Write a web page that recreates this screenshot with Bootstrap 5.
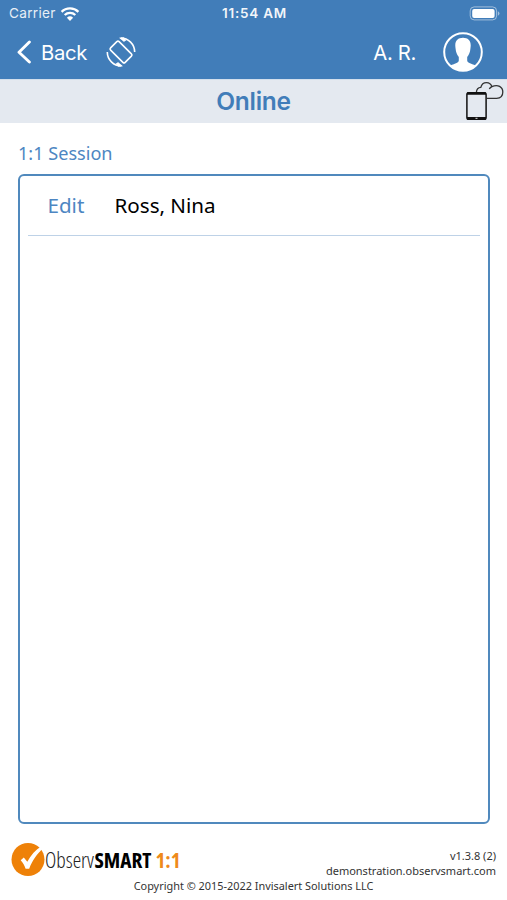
<!DOCTYPE html>
<html lang="en">
<head>
<meta charset="utf-8">
<meta name="viewport" content="width=device-width, initial-scale=1">
<title>1:1 Session</title>
<link href="https://cdn.jsdelivr.net/npm/bootstrap@5.3.0/dist/css/bootstrap.min.css" rel="stylesheet">
<style>
:root{--brand:#417db9}
body{font-family:"Noto Sans",sans-serif;height:900px;color:#000;overflow:hidden}
svg{display:block;flex:none}
.ios{font-family:Inter,sans-serif}
.top-area{background:var(--brand);height:79px;color:#fff}
.status-row{height:27px;font-size:13px;line-height:27px;padding:0 7px 0 9px}
.status-row>div{flex:1 1 0}
.carrier{font-size:13.6px;letter-spacing:.3px;opacity:.88}
.clock{font-size:13.5px;font-weight:600;letter-spacing:.75px;opacity:.93}
.nav-row{height:52px;padding:0 24px 2px 17px}
.nav-label{font-size:20.3px;line-height:51px}
.back-label{margin-left:9px;letter-spacing:-.3px}
.title-row{background:#e4e9f0;height:44px;border-top:1px solid #d3dfec}
.title-row h1{font-size:24.5px;line-height:43px;font-weight:600;color:var(--brand);letter-spacing:-.25px}
.session-label{height:51px;padding:17px 18px 0;font-size:18.1px;line-height:26px;color:#4d86c2}
.session-box{height:650px;margin:0 17px 0 18px;border:2px solid #5089bd;border-radius:6px;padding:0 8px}
.session-item{height:60px;border-bottom:1px solid #bed2e7;padding-left:19.5px;font-size:20.6px;line-height:58px}
.edit-link{color:#4d86c2;width:67px;text-decoration:none}
.foot{height:54px;padding:16px 11px 0 11px}
.foot-info{font-size:11px;line-height:15px;color:#333;padding-top:8px}
.copyright{font-size:10.9px;line-height:15px;color:#333}
.wordmark{font-family:"Open Sans",sans-serif;font-size:21.5px;font-stretch:75%}
</style>
</head>
<body class="m-0 bg-white">
<header class="top-area ios">
  <div class="status-row d-flex align-items-center">
    <div class="d-flex align-items-center"><span class="carrier">Carrier</span>
      <svg class="ms-1" width="20" height="14" viewBox="0 0 20 14" fill="none" stroke="#fff" stroke-width="2.3"><path d="M1.6 4.9a12 12 0 0 1 16.8 0M4.7 8a7.6 7.6 0 0 1 10.6 0"/><path d="M10 14 6.9 10.7a4.5 4.5 0 0 1 6.2 0z" fill="#fff" stroke="none"/></svg>
    </div>
    <span class="clock">11:54 AM</span>
    <div class="d-flex justify-content-end">
      <svg width="31" height="15" viewBox="0 0 31 15"><rect x="1.2" y=".9" width="26.4" height="13" rx="4" fill="none" stroke="#fff" stroke-opacity=".5"/><rect x="3.2" y="2.900" width="22.400" height="9" rx="2" fill="#fff"/><path d="M28.900 5.200v4.600q1.600-.8 1.600-2.300t-1.600-2.300z" fill="#fff" opacity=".5"/></svg>
    </div>
  </div>
  <nav class="nav-row d-flex align-items-center">
    <svg width="15" height="24" viewBox="0 0 15 24" fill="none" stroke="#fff" stroke-width="2.900" stroke-linecap="round" stroke-linejoin="round"><path d="M12.400 2 2 12.300 12.400 22"/></svg>
    <span class="nav-label back-label">Back</span>
    <svg style="margin-left:18px" width="32" height="32" viewBox="0 0 32 32" fill="none" stroke="#fff" stroke-width="1.600" stroke-linejoin="round"><rect x="10" y="5.700" width="12" height="20.600" rx="1.600" transform="rotate(-45 16 16)"/><path d="M15.700 2A14 14 0 0 1 29.700 16M16.300 30A14 14 0 0 1 2.300 16"/><path d="m14.700 2 4.200 3.400 2-1.100L19 1.800zM17.300 30l-4.200-3.400-2 1.100 1.900 2.500z" fill="#fff" stroke-width=".7"/></svg>
    <span class="nav-label ms-auto" style="letter-spacing:-.35px">A. R.</span>
    <svg style="margin-left:27px" width="40" height="40" viewBox="0 0 40 40"><defs><clipPath id="avatar"><circle cx="20" cy="20" r="18.600"/></clipPath></defs><circle cx="20" cy="20" r="18.800" fill="none" stroke="#fff" stroke-width="2"/><path clip-path="url(#avatar)" fill="#fff" d="M20 5.800c-5 0-8 3-7.700 8.200.1 1 .2 1.800.3 2.800.3 3.300 1.400 6.200 3.200 8.200v3.600c0 1.200-1 1.800-2.200 2.300C10.300 32.300 7 33 6.300 35v6h27.400v-6c-.7-2-4-2.700-7.300-4.100-1.200-.5-2.200-1.100-2.200-2.300V25c1.800-2 2.900-4.900 3.200-8.200.1-1 .2-1.800.3-2.800C28 8.800 25 5.800 20 5.800z"/></svg>
  </nav>
</header>
<div class="title-row ios position-relative text-center">
  <h1 class="m-0">Online</h1>
  <svg class="position-absolute top-0 end-0" width="44" height="43" viewBox="0 0 44 43" fill="none" stroke="#111"><path stroke="#333" stroke-width="1.300" d="M13.400 12.300C13.600 9.200 15.400 7.500 17.800 7.400 18.500 4.600 20.800 2.600 23.500 2.600c2.500 0 4.600 1.600 5.400 4.100 6-3 10.900.4 10.900 5.400 0 3.700-2.400 6.200-6.200 6.200H24M28.900 6.700c-1.200.6-2 1.300-2.600 2.300"/><rect x="3.900" y="12.800" width="19.200" height="26.400" rx="1.800" stroke-width="1.500"/><path d="M4 13.500h19M4 38.300h19" stroke-width="2.600"/><path d="M12.500 38.300h2" stroke="#ddd" stroke-width="1"/></svg>
</div>
<main>
  <div class="session-label"><span>1:1 Session</span></div>
  <section class="session-box">
    <div class="session-item d-flex"><a class="edit-link" href="#">Edit</a><span>Ross, Nina</span></div>
  </section>
</main>
<footer>
  <div class="foot d-flex justify-content-between">
    <svg class="wordmark" width="174" height="38" viewBox="0 0 174 38"><circle cx="17" cy="19.500" r="16.500" fill="#ee8108"/><path d="M9.700 20.200 12.800 17.600 16.300 21.800C20 14.800 24.500 10 30.400 6.200L32.200 8.600C25.800 14.200 21.500 20.200 18.200 28.800H14.600C13.600 25.500 12 22.600 9.700 20.200z" fill="#fff"/><text x="34" y="28" font-weight="300" textLength="49" lengthAdjust="spacingAndGlyphs" fill="#222">Observ</text><text x="83.500" y="28" font-weight="700" textLength="57" lengthAdjust="spacingAndGlyphs" fill="#000">SMART</text><text x="144.500" y="28" font-weight="700" textLength="25" lengthAdjust="spacingAndGlyphs" fill="#ee8a1b">1:1</text></svg>
    <div class="foot-info text-end"><div>v1.3.8 (2)</div><div>demonstration.observsmart.com</div></div>
  </div>
  <div class="copyright text-center">Copyright © 2015-2022 Invisalert Solutions LLC</div>
</footer>
<script src="https://cdn.jsdelivr.net/npm/bootstrap@5.3.0/dist/js/bootstrap.bundle.min.js"></script>
</body>
</html>
